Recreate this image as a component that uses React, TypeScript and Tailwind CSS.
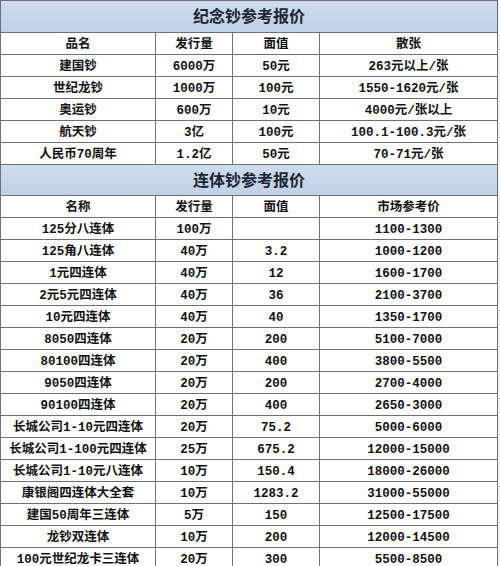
import React from "react";

const rows1: string[][] = [
  ["建国钞", "6000万", "50元", "263元以上/张"],
  ["世纪龙钞", "1000万", "100元", "1550-1620元/张"],
  ["奥运钞", "600万", "10元", "4000元/张以上"],
  ["航天钞", "3亿", "100元", "100.1-100.3元/张"],
  ["人民币70周年", "1.2亿", "50元", "70-71元/张"],
];

const rows2: string[][] = [
  ["125分八连体", "100万", "", "1100-1300"],
  ["125角八连体", "40万", "3.2", "1000-1200"],
  ["1元四连体", "40万", "12", "1600-1700"],
  ["2元5元四连体", "40万", "36", "2100-3700"],
  ["10元四连体", "40万", "40", "1350-1700"],
  ["8050四连体", "20万", "200", "5100-7000"],
  ["80100四连体", "20万", "400", "3800-5500"],
  ["9050四连体", "20万", "200", "2700-4000"],
  ["90100四连体", "20万", "400", "2650-3000"],
  ["长城公司1-10元四连体", "20万", "75.2", "5000-6000"],
  ["长城公司1-100元四连体", "25万", "675.2", "12000-15000"],
  ["长城公司1-10元八连体", "10万", "150.4", "18000-26000"],
  ["康银阁四连体大全套", "10万", "1283.2", "31000-55000"],
  ["建国50周年三连体", "5万", "150", "12500-17500"],
  ["龙钞双连体", "10万", "200", "12000-14500"],
  ["100元世纪龙卡三连体", "20万", "300", "5500-8500"],
];

const font = { fontFamily: '"Liberation Mono", "Noto Sans CJK SC", monospace' };

function Row({ cells }: { cells: string[] }) {
  return (
    <div className="grid grid-cols-[156px_77px_87px_178px] h-[22px]">
      {cells.map((c, i) => (
        <div
          key={i}
          className={
            "flex items-center justify-center pt-[4px] leading-none border-b border-r border-[#707070] text-[12.5px] font-bold text-[#111111] whitespace-nowrap" +
            (i === 0 ? " border-l" : "")
          }
        >
          {c}
        </div>
      ))}
    </div>
  );
}

function Title({ text, top }: { text: string; top?: boolean }) {
  return (
    <div
      className={
        "w-[498px] flex items-center justify-center pt-[3px] leading-none bg-gradient-to-b from-[#cfdcee] to-[#bfd0e7] border-b border-l border-r border-[#707070] text-[16px] font-bold text-[#1c2633] " +
        (top ? "h-[33px] border-t" : "h-[31px]")
      }
    >
      {text}
    </div>
  );
}

export default function App() {
  return (
    <div className="w-[500px] h-[566px] overflow-hidden bg-[#f4f4f4]" style={font}>
      <div className="w-[498px] bg-white">
        <Title text="纪念钞参考报价" top />
        <Row cells={["品名", "发行量", "面值", "散张"]} />
        {rows1.map((r, i) => (
          <Row key={i} cells={r} />
        ))}
        <Title text="连体钞参考报价" />
        <Row cells={["名称", "发行量", "面值", "市场参考价"]} />
        {rows2.map((r, i) => (
          <Row key={i} cells={r} />
        ))}
      </div>
    </div>
  );
}
